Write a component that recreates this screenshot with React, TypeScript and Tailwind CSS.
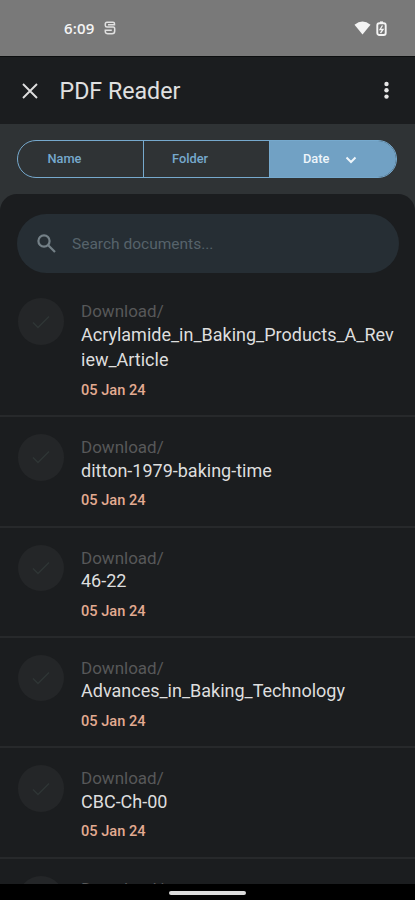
import { useState } from 'react';

const documents = [
  { name: 'Acrylamide_in_Baking_Products_A_Review_Article', folder: 'Download/', date: '05 Jan 24' },
  { name: 'ditton-1979-baking-time', folder: 'Download/', date: '05 Jan 24' },
  { name: '46-22', folder: 'Download/', date: '05 Jan 24' },
  { name: 'Advances_in_Baking_Technology', folder: 'Download/', date: '05 Jan 24' },
  { name: 'CBC-Ch-00', folder: 'Download/', date: '05 Jan 24' },
  { name: '', folder: 'Download/', date: '' },
];

const tabs = [
  { label: 'Name', style: 'w-[125px] pl-[29.5px]' },
  { label: 'Folder', style: 'w-[126px] pl-[28px] border-l-[1.5px]' },
  { label: 'Date', style: 'flex-1 pl-[33px] border-l-[1.5px]' },
];

function StatusBar() {
  return (
    <div className="h-14 shrink-0 bg-[#797979] flex items-center justify-between pl-[64px] pr-7 text-[#f4f4f4]">
      <div className="flex items-center">
        <span className="w-8 text-[15px] leading-5 font-semibold whitespace-nowrap font-['Open_Sans',sans-serif] tracking-[0.2px]">6:09</span>
        <svg className="ml-2 w-3 h-[14px]" viewBox="0 0 12 14" fill="none" stroke="#e0e0e0" strokeWidth="1.5">
          <path d="M10.5 4.4V2.8Q10.500 1.200 9 1.200H3Q1.300 1.200 1.300 3v1.500Q1.300 6 3 6h6.200Q10.700 6 10.700 8v2Q10.700 12.800 8 12.800H4Q1.300 12.800 1.300 10.400V9.200h6.500M4 3.700h6.500" />
        </svg>
      </div>
      <div className="flex items-center gap-[5px]">
        <svg className="w-[17px] h-[14px]" viewBox="0 0 17 14" fill="currentColor">
          <path d="M.5 3.8Q8.5-2.6 16.5 3.8L8.5 13.5Z" />
        </svg>
        <svg className="w-[11px] h-[15px]" viewBox="0 0 11 15" fill="none" stroke="currentColor">
          <path d="M4 1.3h3" strokeWidth="1.8" />
          <rect x="1.3" y="2.3" width="8.4" height="11.7" rx="2" strokeWidth="1.9" />
          <path d="M6.5 4.5 4 8.5h3L4.5 12" strokeWidth="1.3" />
        </svg>
      </div>
    </div>
  );
}

function Header() {
  return (
    <div className="h-[68px] shrink-0 bg-[#1b1d1f] border-t border-[#0c0e0f] flex items-center">
      <button className="ml-[22px] w-4 h-4">
        <svg className="w-4 h-4" viewBox="0 0 16 16" fill="none" stroke="#dedede" strokeWidth="1.9">
          <path d="M1 1l14 14M15 1 1 15" />
        </svg>
      </button>
      <h1 className="ml-[21.5px] text-[23.2px] leading-8 text-[#e0e0e0]">PDF Reader</h1>
      <button className="ml-auto mr-[26.5px]">
        <svg className="w-[5px] h-[19px]" viewBox="0 0 5 19" fill="#e6e6e6">
          <circle cx="2.5" cy="3" r="2.2" />
          <circle cx="2.5" cy="9.3" r="2.2" />
          <circle cx="2.5" cy="15.6" r="2.2" />
        </svg>
      </button>
    </div>
  );
}

function SortTabs({ active, onChange }: { active: string; onChange: (tab: string) => void }) {
  return (
    <div className="ml-[17px] mr-[18px] h-[38px] rounded-full border-[1.5px] border-[#76a9cd] overflow-hidden flex text-[12.8px] font-medium">
      {tabs.map(({ label, style }) => (
        <button
          key={label}
          onClick={() => onChange(label)}
          className={`flex items-center border-[#76a9cd] ${style} ${
            active === label ? 'bg-[#71a1c4] text-[#eef5fa]' : 'text-[#76a9cd]'
          }`}
        >
          {label}
          {active === label && (
            <svg className="ml-4 mt-px w-[12px] h-[8px]" viewBox="0 0 12 8" fill="none" stroke="currentColor" strokeWidth="2">
              <path d="M1.5 1.5 6 6l4.5-4.5" />
            </svg>
          )}
        </button>
      ))}
    </div>
  );
}

function DocumentRow({ doc }: { doc: (typeof documents)[number] }) {
  return (
    <li className="flex shrink-0 pl-[17.5px] pr-[18px] pt-[17px] pb-[15.4px] border-b-2 border-[#27292b]">
      <div className="w-[46.5px] h-[46.5px] shrink-0 rounded-full bg-[#242628] flex items-center justify-center">
        <svg className="w-[18px] h-[14px]" viewBox="0 0 18 14" fill="none" stroke="#2f3535" strokeWidth="1.5">
          <path d="M1 7.5 6 12.5 17 1.5" />
        </svg>
      </div>
      <div className="ml-[17px] pt-[3px] flex-1 min-w-0">
        <p className="text-[17px] leading-[21px] text-[#575859]">{doc.folder}</p>
        <p className="-mt-[0.6px] text-[18px] leading-[25.4px] text-[#dedede] break-all">{doc.name}</p>
        <p className="mt-[7.2px] text-[14.6px] leading-5 font-medium text-[#e3ab91]">{doc.date}</p>
      </div>
    </li>
  );
}

export default function App() {
  const [active, setActive] = useState('Date');
  const [query, setQuery] = useState('');

  return (
    <div className="w-full h-[900px] overflow-hidden flex flex-col bg-[#2f3335] font-[Roboto,sans-serif]">
      <StatusBar />
      <Header />
      <div className="h-[70px] shrink-0 pt-4">
        <SortTabs active={active} onChange={setActive} />
      </div>

      {/* Document list */}
      <div className="flex-1 min-h-0 overflow-hidden bg-[#1b1d1f] rounded-t-[17px] pt-5 flex flex-col">
        <div className="ml-[17px] mr-4 h-[59px] shrink-0 rounded-full bg-[#262e34] flex items-center">
          <svg className="ml-[20px] w-[19px] h-[19px] shrink-0" viewBox="0 0 19 19" fill="none" stroke="#748087" strokeWidth="2.2">
            <circle cx="7" cy="7" r="5.6" />
            <path d="M11 11l7 7" />
          </svg>
          <input
            value={query}
            onChange={(e) => setQuery(e.target.value)}
            placeholder="Search documents..."
            className="ml-4 mt-[2px] flex-1 min-w-0 bg-transparent outline-none text-[15.5px] text-[#dedede] placeholder:text-[#56636b]"
          />
        </div>
        <ul className="mt-[8.4px] flex flex-col">
          {documents.map((doc, i) => (
            <DocumentRow key={i} doc={doc} />
          ))}
        </ul>
      </div>

      {/* Gesture bar */}
      <div className="h-4 shrink-0 bg-black flex justify-center">
        <div className="mt-[7px] w-[77px] h-1 rounded-full bg-[#dcdcdc]" />
      </div>
    </div>
  );
}
